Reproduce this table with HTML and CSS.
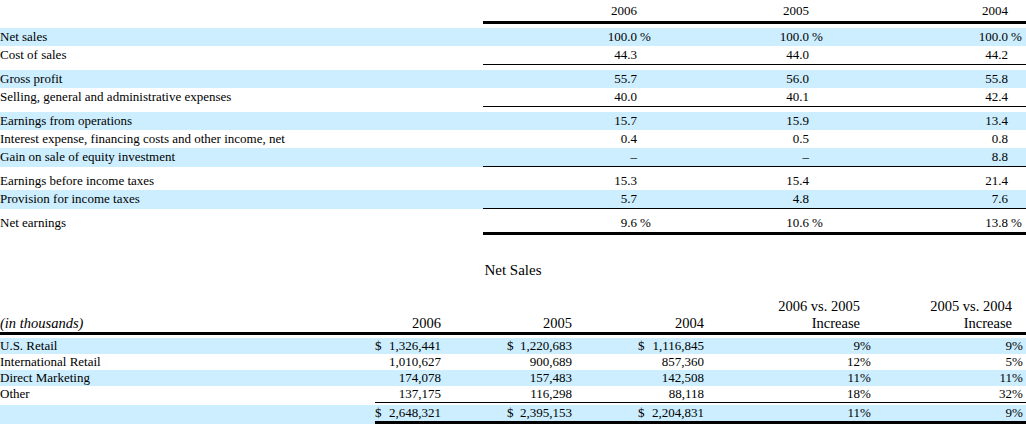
FILE: index.html
```html
<!DOCTYPE html>
<html>
<head>
<meta charset="utf-8">
<link rel="stylesheet" href="styles.css">
</head>
<body>
<section class="t1">
  <div class="row head">
    <div class="lbl"></div>
    <div class="vals thick">
      <div class="n">2006</div><div class="p"></div>
      <div class="n">2005</div><div class="p"></div>
      <div class="n">2004</div><div class="p"></div>
    </div>
  </div>
  <div class="row band first">
    <div class="lbl">Net sales</div>
    <div class="vals">
      <div class="n">100.0</div><div class="p">%</div>
      <div class="n">100.0</div><div class="p">%</div>
      <div class="n">100.0</div><div class="p">%</div>
    </div>
  </div>
  <div class="row ul">
    <div class="lbl">Cost of sales</div>
    <div class="vals thin">
      <div class="n">44.3</div><div class="p"></div>
      <div class="n">44.0</div><div class="p"></div>
      <div class="n">44.2</div><div class="p"></div>
    </div>
  </div>
  <div class="row band gap">
    <div class="lbl">Gross profit</div>
    <div class="vals">
      <div class="n">55.7</div><div class="p"></div>
      <div class="n">56.0</div><div class="p"></div>
      <div class="n">55.8</div><div class="p"></div>
    </div>
  </div>
  <div class="row ul">
    <div class="lbl">Selling, general and administrative expenses</div>
    <div class="vals thin">
      <div class="n">40.0</div><div class="p"></div>
      <div class="n">40.1</div><div class="p"></div>
      <div class="n">42.4</div><div class="p"></div>
    </div>
  </div>
  <div class="row band gap">
    <div class="lbl">Earnings from operations</div>
    <div class="vals">
      <div class="n">15.7</div><div class="p"></div>
      <div class="n">15.9</div><div class="p"></div>
      <div class="n">13.4</div><div class="p"></div>
    </div>
  </div>
  <div class="row">
    <div class="lbl">Interest expense, financing costs and other income, net</div>
    <div class="vals">
      <div class="n">0.4</div><div class="p"></div>
      <div class="n">0.5</div><div class="p"></div>
      <div class="n">0.8</div><div class="p"></div>
    </div>
  </div>
  <div class="row band ul">
    <div class="lbl">Gain on sale of equity investment</div>
    <div class="vals thin">
      <div class="n">–</div><div class="p"></div>
      <div class="n">–</div><div class="p"></div>
      <div class="n">8.8</div><div class="p"></div>
    </div>
  </div>
  <div class="row gap">
    <div class="lbl">Earnings before income taxes</div>
    <div class="vals">
      <div class="n">15.3</div><div class="p"></div>
      <div class="n">15.4</div><div class="p"></div>
      <div class="n">21.4</div><div class="p"></div>
    </div>
  </div>
  <div class="row band ul">
    <div class="lbl">Provision for income taxes</div>
    <div class="vals thin">
      <div class="n">5.7</div><div class="p"></div>
      <div class="n">4.8</div><div class="p"></div>
      <div class="n">7.6</div><div class="p"></div>
    </div>
  </div>
  <div class="row gap last">
    <div class="lbl">Net earnings</div>
    <div class="vals thick">
      <div class="n">9.6</div><div class="p">%</div>
      <div class="n">10.6</div><div class="p">%</div>
      <div class="n">13.8</div><div class="p">%</div>
    </div>
  </div>
</section>

<h2 class="title">Net Sales</h2>

<section class="t2">
  <div class="row head2">
    <div class="lbl2 it">(in thousands)</div>
    <div class="vals2">
      <div class="m n">2006</div><div></div>
      <div class="m n">2005</div><div></div>
      <div class="m n">2004</div>
      <div class="n">2006 vs. 2005<br>Increase</div><div></div>
      <div class="n">2005 vs. 2004<br>Increase</div><div></div>
    </div>
  </div>
  <div class="row band first2">
    <div class="lbl2">U.S. Retail</div>
    <div class="vals2">
      <div class="m"><span>$</span><span>1,326,441</span></div><div></div>
      <div class="m"><span>$</span><span>1,220,683</span></div><div></div>
      <div class="m"><span>$</span><span>1,116,845</span></div>
      <div class="n">9</div><div class="p2">%</div>
      <div class="n">9</div><div class="p2">%</div>
    </div>
  </div>
  <div class="row">
    <div class="lbl2">International Retail</div>
    <div class="vals2">
      <div class="m"><span></span><span>1,010,627</span></div><div></div>
      <div class="m"><span></span><span>900,689</span></div><div></div>
      <div class="m"><span></span><span>857,360</span></div>
      <div class="n">12</div><div class="p2">%</div>
      <div class="n">5</div><div class="p2">%</div>
    </div>
  </div>
  <div class="row band">
    <div class="lbl2">Direct Marketing</div>
    <div class="vals2">
      <div class="m"><span></span><span>174,078</span></div><div></div>
      <div class="m"><span></span><span>157,483</span></div><div></div>
      <div class="m"><span></span><span>142,508</span></div>
      <div class="n">11</div><div class="p2">%</div>
      <div class="n">11</div><div class="p2">%</div>
    </div>
  </div>
  <div class="row ul2">
    <div class="lbl2">Other</div>
    <div class="vals2 thin">
      <div class="m"><span></span><span>137,175</span></div><div></div>
      <div class="m"><span></span><span>116,298</span></div><div></div>
      <div class="m"><span></span><span>88,118</span></div>
      <div class="n">18</div><div class="p2">%</div>
      <div class="n">32</div><div class="p2">%</div>
    </div>
  </div>
  <div class="row band total">
    <div class="lbl2"></div>
    <div class="vals2 thick">
      <div class="m"><span>$</span><span>2,648,321</span></div><div></div>
      <div class="m"><span>$</span><span>2,395,153</span></div><div></div>
      <div class="m"><span>$</span><span>2,204,831</span></div>
      <div class="n">11</div><div class="p2">%</div>
      <div class="n">9</div><div class="p2">%</div>
    </div>
  </div>
</section>
</body>
</html>
```

FILE: styles.css
```css
html, body {
  margin: 0;
  padding: 0;
  background: #ffffff;
}

body {
  width: 1026px;
  font-family: "Liberation Serif", "Times New Roman", serif;
  font-size: 13px;
  color: #000000;
}

.row {
  display: flex;
  align-items: flex-start;
}

.band {
  background: #cceeff;
}

.n {
  text-align: right;
  white-space: nowrap;
}

.p {
  padding-left: 3px;
  white-space: nowrap;
}

.thick {
  border-bottom: 3px solid #000000;
}

.thin {
  border-bottom: 1px solid #000000;
}

/* ---------- first table ---------- */

.t1 .row {
  height: 18px;
  line-height: 18px;
}

.t1 .lbl {
  width: 483px;
  flex: none;
  white-space: nowrap;
}

.vals {
  flex: 1;
  display: grid;
  grid-template-columns: 154px 18px 154px 17px 182px 1fr;
  box-sizing: border-box;
}

.t1 .row.head {
  height: 24px;
  line-height: 21px;
}

.t1 .head .vals {
  height: 24px;
}

.t1 .first {
  margin-top: 4px;
}

.t1 .gap {
  margin-top: 5px;
}

.t1 .row.ul,
.t1 .ul .vals {
  height: 19px;
}

.t1 .row.last,
.t1 .last .vals {
  height: 21px;
}

/* ---------- title ---------- */

.title {
  margin: 0;
  padding-top: 26px;
  height: 36px;
  font-size: 15px;
  font-weight: normal;
  line-height: 18px;
  text-align: center;
}

/* ---------- second table ---------- */

.t2 .row {
  height: 16px;
  line-height: 16px;
}

.t2 .lbl2 {
  width: 375px;
  flex: none;
  white-space: nowrap;
}

.it {
  font-style: italic;
}

.vals2 {
  flex: 1;
  display: grid;
  grid-template-columns: 66px 66px 65px 66px 66px 156px 12px 140px 1fr;
  box-sizing: border-box;
}

.t2 .row.head2 {
  height: 35px;
  align-items: flex-end;
  border-bottom: 3px solid #000000;
  font-size: 14.5px;
  line-height: 17px;
}

.t2 .head2 .vals2 {
  align-items: end;
}

.m {
  display: flex;
  justify-content: space-between;
  white-space: nowrap;
}

.m.n {
  display: block;
  text-align: right;
}

.p2 {
  white-space: nowrap;
}

.t2 .first2 {
  margin-top: 3px;
}

.t2 .row.ul2,
.t2 .ul2 .vals2 {
  height: 17px;
}

.t2 .row.total {
  margin-top: 2px;
  height: 19px;
}

.t2 .total .vals2 {
  height: 19px;
}
```
